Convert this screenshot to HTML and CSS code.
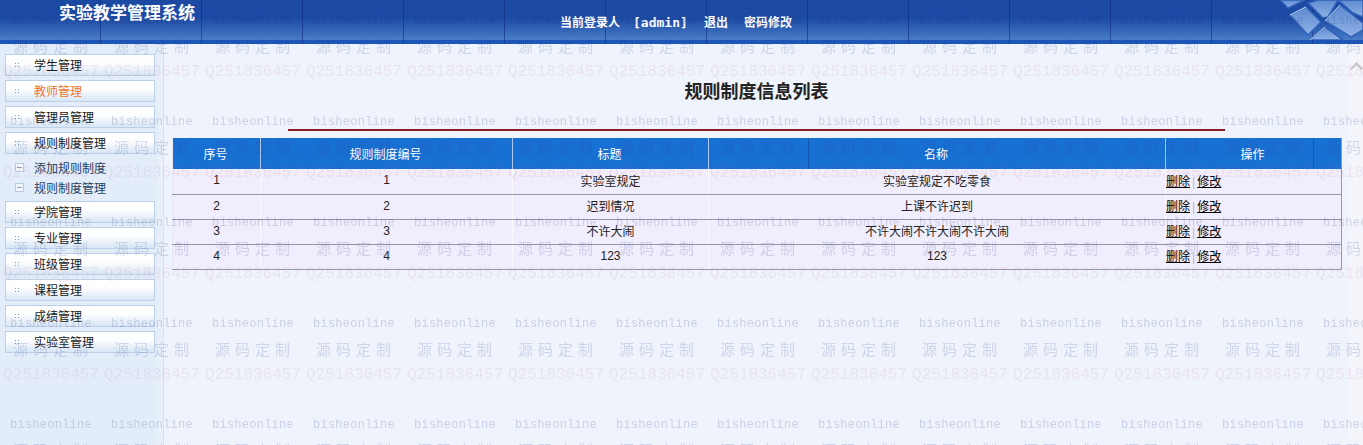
FILE: index.html
```html
<!DOCTYPE html>
<html lang="zh-CN">
<head>
    <meta charset="UTF-8">
    <meta name="viewport" content="width=device-width, initial-scale=1.0">
    <title>实验教学管理系统</title>
    <link rel="stylesheet" href="styles.css">
</head>
<body>
    <div class="header">
        <div class="brand">实验教学管理系统</div>
        <div class="user-bar">
            <span class="user-label">当前登录人</span>
            <span class="user-name">[admin]</span>
            <a href="#">退出</a>
            <a href="#">密码修改</a>
        </div>
        <svg class="corner" width="90" height="40" viewBox="0 0 90 40">
            <defs>
                <linearGradient id="key" x1="0" y1="0" x2="0" y2="1">
                    <stop offset="0" stop-color="#5f8ad0"/>
                    <stop offset="1" stop-color="#8fb2e6"/>
                </linearGradient>
            </defs>
            <g fill="url(#key)" stroke="#2f62b8" stroke-width="1.5">
                <path d="M7 0 L15 8 L32 0 Z"/>
                <path d="M17 15 L33 7 L48 22 L35 35 Z"/>
                <path d="M35 3 L45 0 L65 0 L55 17 L50 18 Z"/>
                <path d="M52 21 L67 5 L90 23 L90 30 L78 37 Z"/>
                <path d="M37 40 L52 27 L70 40 Z"/>
                <path d="M65 0 L90 0 L90 17 L80 13 Z"/>
            </g>
            <g stroke="#c3d8f5" stroke-width="1" fill="none">
                <path d="M17 15 L33 7"/>
                <path d="M52 21 L67 5"/>
                <path d="M37 40 L52 27"/>
            </g>
        </svg>
    </div>

    <div class="page">
        <div class="sidebar">
            <a class="menu-item" href="#"><span class="dots"></span>学生管理</a>
            <a class="menu-item active" href="#"><span class="dots"></span>教师管理</a>
            <a class="menu-item" href="#"><span class="dots"></span>管理员管理</a>
            <a class="menu-item" href="#"><span class="dots"></span>规则制度管理</a>
            <div class="submenu">
                <a href="#"><span class="box"></span>添加规则制度</a>
                <a href="#"><span class="box"></span>规则制度管理</a>
            </div>
            <a class="menu-item" href="#"><span class="dots"></span>学院管理</a>
            <a class="menu-item" href="#"><span class="dots"></span>专业管理</a>
            <a class="menu-item" href="#"><span class="dots"></span>班级管理</a>
            <a class="menu-item" href="#"><span class="dots"></span>课程管理</a>
            <a class="menu-item" href="#"><span class="dots"></span>成绩管理</a>
            <a class="menu-item" href="#"><span class="dots"></span>实验室管理</a>
        </div>

        <div class="content">
            <h1>规则制度信息列表</h1>
            <div class="title-rule"></div>
            <table>
                <colgroup>
                    <col class="col-index">
                    <col class="col-code">
                    <col class="col-title">
                    <col class="col-name">
                    <col class="col-action">
                </colgroup>
                <thead>
                    <tr>
                        <th>序号</th>
                        <th>规则制度编号</th>
                        <th>标题</th>
                        <th>名称</th>
                        <th>操作</th>
                    </tr>
                </thead>
                <tbody>
                    <tr>
                        <td>1</td>
                        <td>1</td>
                        <td>实验室规定</td>
                        <td>实验室规定不吃零食</td>
                        <td class="actions"><a href="#">删除</a><i>|</i><a href="#">修改</a></td>
                    </tr>
                    <tr>
                        <td>2</td>
                        <td>2</td>
                        <td>迟到情况</td>
                        <td>上课不许迟到</td>
                        <td class="actions"><a href="#">删除</a><i>|</i><a href="#">修改</a></td>
                    </tr>
                    <tr>
                        <td>3</td>
                        <td>3</td>
                        <td>不许大闹</td>
                        <td>不许大闹不许大闹不许大闹</td>
                        <td class="actions"><a href="#">删除</a><i>|</i><a href="#">修改</a></td>
                    </tr>
                    <tr>
                        <td>4</td>
                        <td>4</td>
                        <td>123</td>
                        <td>123</td>
                        <td class="actions"><a href="#">删除</a><i>|</i><a href="#">修改</a></td>
                    </tr>
                </tbody>
            </table>
        </div>

        <div class="scrollbar"><span class="scroll-up"></span></div>
    </div>

    <div id="watermark" class="watermark"></div>
    <script src="watermark.js"></script>
</body>
</html>
```

FILE: styles.css
```css
* {
    box-sizing: border-box;
}
html, body {
    height: 100%;
}
body {
    margin: 0;
    overflow: hidden;
    font-family: "Liberation Sans", "Noto Sans CJK SC", sans-serif;
    font-size: 12px;
    color: #111;
    background-color: #eff3fc;
}
a {
    color: inherit;
    text-decoration: none;
}

/* header */
.header {
    position: relative;
    height: 44px;
    overflow: hidden;
    background-color: #1c4aa3;
    background-image:
        repeating-linear-gradient(90deg, transparent 0, transparent 100px, rgba(10, 40, 120, 0.55) 100px, rgba(10, 40, 120, 0.55) 101px),
        linear-gradient(to bottom, #1c49a2 0, #1c4aa4 18px, #3f72c0 36px, #4a7dc8 40px, #1c56b8 40px, #1c56b8 44px);
    color: #fff;
}
.brand {
    position: absolute;
    left: 59px;
    top: 2px;
    font-family: "Liberation Serif", "Noto Sans CJK SC", serif;
    font-size: 17px;
    line-height: 24px;
    font-weight: bold;
}
.user-bar {
    position: absolute;
    left: 560px;
    top: 14px;
    display: flex;
    gap: 16px;
    line-height: 18px;
    font-weight: bold;
}
.user-bar .user-label {
    margin-right: -3px;
}
.user-bar .user-name {
    font-family: "DejaVu Sans Mono", monospace;
    font-size: 13px;
    width: 55px;
}
.corner {
    position: absolute;
    right: 0;
    top: 0;
}

/* layout */
.page {
    display: flex;
    height: 401px;
}
.sidebar {
    width: 164px;
    flex-shrink: 0;
    padding: 10px 8px 0 5px;
    background: linear-gradient(to right, #e2edf9, #e3edf9 155px, #eaf1fb 163px);
    border-right: 1px solid #d8e0ee;
}
.menu-item {
    display: flex;
    align-items: center;
    height: 22px;
    margin-bottom: 4px;
    padding: 0 0 1px 8px;
    border: 1px solid #bdd0e8;
    background: linear-gradient(to bottom, #ffffff, #fdfeff 40%, #d8e6f5);
    color: #1a1a1a;
}
.menu-item.active {
    color: #f0732a;
}
.dots {
    width: 5px;
    height: 5px;
    margin-right: 15px;
    background-image: radial-gradient(circle, #7d9cc2 0, #7d9cc2 1px, transparent 1px);
    background-size: 3px 3px;
}
.submenu {
    display: flex;
    flex-direction: column;
    margin-bottom: 4px;
    margin-top: -1px;
    color: #24405f;
}
.submenu a {
    display: flex;
    align-items: center;
    height: 20px;
    padding-left: 10px;
}
.box {
    width: 9px;
    height: 9px;
    margin-right: 10px;
    border: 1px solid #b8cbe2;
    background: #f2f6fb;
}
.box::after {
    content: "";
    display: block;
    width: 5px;
    height: 1px;
    margin: 3px 1px 0;
    background-color: #8aa3c4;
}
.content {
    flex: 1;
    padding: 0 7px 0 8px;
    min-width: 0;
}
.content h1 {
    margin: 37px 0 0;
    height: 22px;
    text-align: center;
    font-family: "Liberation Serif", "Noto Sans CJK SC", serif;
    font-size: 18px;
    line-height: 22px;
    font-weight: bold;
    color: #222;
}
.title-rule {
    height: 2px;
    width: 937px;
    margin: 26px 0 7px 116px;
    background-color: #8a1c22;
}

/* table */
table {
    width: 1169px;
    table-layout: fixed;
    border-collapse: collapse;
    border-right: 1px solid #9597a8;
    border-left: 1px solid #e8e8f4;
}
.col-index { width: 88px; }
.col-code { width: 252px; }
.col-title { width: 196px; }
.col-name { width: 457px; }
.col-action { width: 176px; }
th {
    height: 31px;
    padding: 0 2px 0 0;
    text-align: center;
    font-weight: normal;
    color: #fff;
    background-color: #1870d2;
    background-image: repeating-linear-gradient(90deg, transparent 0, transparent 100px, rgba(10, 40, 120, 0.35) 100px, rgba(10, 40, 120, 0.35) 101px);
    background-attachment: fixed;
    border-right: 1px solid #a9c8ec;
}
th:last-child {
    border-right: none;
}
td {
    height: 25px;
    padding: 0 0 2px;
    text-align: center;
    background-color: #f0edfc;
    border-right: 1px solid #fbfaff;
    border-bottom: 1px solid #9597a8;
    color: #222;
}
td:last-child {
    border-right: none;
}
td.actions {
    text-align: left;
    color: #000;
}
td.actions a {
    text-decoration: underline;
}
td.actions i {
    margin: 0 2px;
    font-style: normal;
    color: #b9b9c6;
}

/* scrollbar strip */
.scrollbar {
    width: 15px;
    flex-shrink: 0;
    background-color: #f3f5fb;
    padding: 20px 0 0 2px;
}
.scroll-up {
    display: block;
    width: 9px;
    height: 9px;
    margin-left: 2px;
    border-top: 2px solid #c4c4c4;
    border-left: 2px solid #c4c4c4;
    transform: rotate(45deg);
}

/* watermark over everything */
.watermark {
    position: fixed;
    left: 0;
    top: 0;
    width: 1363px;
    height: 445px;
    overflow: hidden;
    pointer-events: none;
    display: grid;
    grid-template-columns: repeat(14, 101px);
    grid-auto-rows: 101px;
}
.mark {
    position: relative;
    white-space: nowrap;
}
.mark span {
    position: absolute;
}
.mark-site {
    left: 10px;
    top: 15px;
    font-family: "Liberation Mono", monospace;
    font-size: 12px;
    line-height: 12px;
    letter-spacing: 0.25px;
    color: rgba(40, 50, 120, 0.18);
}
.mark-tag {
    left: 13px;
    top: 38px;
    font-size: 15px;
    line-height: 18px;
    letter-spacing: 5px;
    color: rgba(50, 60, 140, 0.17);
}
.mark-qq {
    left: 3px;
    top: 63px;
    font-family: "Liberation Mono", monospace;
    font-size: 16px;
    line-height: 18px;
    color: rgba(190, 90, 150, 0.11);
}
```

FILE: watermark.js
```js
// fill the overlay with the repeating watermark tile
const watermark = document.getElementById('watermark');

for (let i = 0; i < 14 * 5; i++) {
    const tile = document.createElement('div');
    tile.className = 'mark';
    tile.innerHTML = `
        <span class="mark-site">bisheonline</span>
        <span class="mark-tag">源码定制</span>
        <span class="mark-qq">Q251836457</span>
    `;
    watermark.appendChild(tile);
}
```
